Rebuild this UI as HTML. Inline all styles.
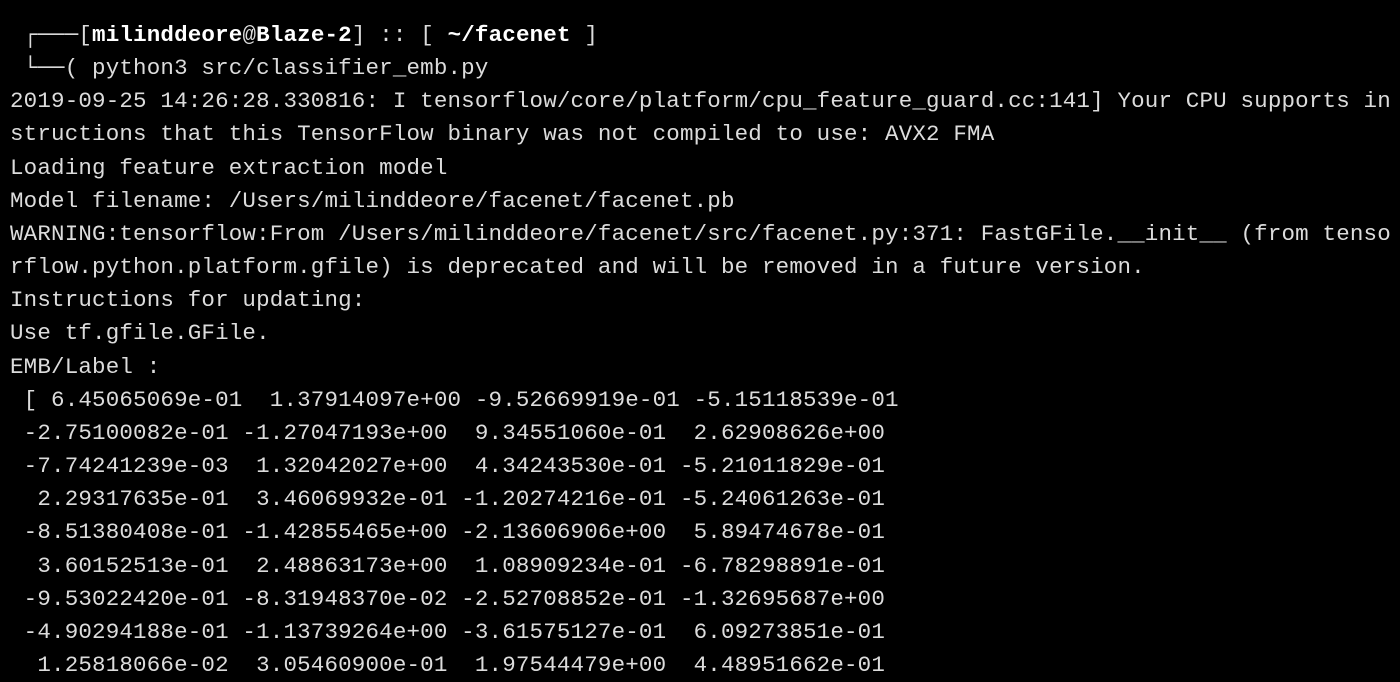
<!DOCTYPE html>
<html><head><meta charset="utf-8"><style>
html,body{margin:0;padding:0;background:#000;width:1400px;height:670px;overflow:hidden}
pre{margin:0;position:absolute;left:10px;top:19px;font-family:"Liberation Mono","DejaVu Sans Mono",monospace;font-size:22.5px;letter-spacing:0.17px;line-height:33.16px;color:#dcdcdc;white-space:pre}
b{color:#fff}
</style></head><body>
<pre> ┌───[<b>milinddeore</b>@<b>Blaze-2</b>] :: [ <b>~/facenet</b> ]
 └──( python3 src/classifier_emb.py
2019-09-25 14:26:28.330816: I tensorflow/core/platform/cpu_feature_guard.cc:141] Your CPU supports in
structions that this TensorFlow binary was not compiled to use: AVX2 FMA
Loading feature extraction model
Model filename: /Users/milinddeore/facenet/facenet.pb
WARNING:tensorflow:From /Users/milinddeore/facenet/src/facenet.py:371: FastGFile.__init__ (from tenso
rflow.python.platform.gfile) is deprecated and will be removed in a future version.
Instructions for updating:
Use tf.gfile.GFile.
EMB/Label :
 [ 6.45065069e-01  1.37914097e+00 -9.52669919e-01 -5.15118539e-01
 -2.75100082e-01 -1.27047193e+00  9.34551060e-01  2.62908626e+00
 -7.74241239e-03  1.32042027e+00  4.34243530e-01 -5.21011829e-01
  2.29317635e-01  3.46069932e-01 -1.20274216e-01 -5.24061263e-01
 -8.51380408e-01 -1.42855465e+00 -2.13606906e+00  5.89474678e-01
  3.60152513e-01  2.48863173e+00  1.08909234e-01 -6.78298891e-01
 -9.53022420e-01 -8.31948370e-02 -2.52708852e-01 -1.32695687e+00
 -4.90294188e-01 -1.13739264e+00 -3.61575127e-01  6.09273851e-01
  1.25818066e-02  3.05460900e-01  1.97544479e+00  4.48951662e-01</pre>
</body></html>
